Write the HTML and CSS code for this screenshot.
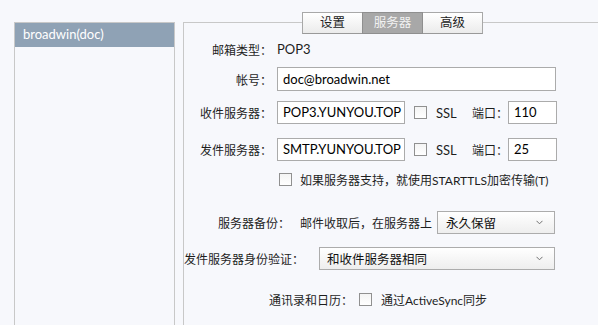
FILE: index.html
```html
<!DOCTYPE html>
<html lang="zh-CN">
<head>
    <meta charset="UTF-8">
    <title>帐户设置</title>
    <link rel="stylesheet" href="styles.css">
</head>
<body>
    <div class="window">
        <div class="accounts">
            <div class="account active">broadwin(doc)</div>
        </div>

        <div class="settings">
            <div class="tabs">
                <div class="tab">设置</div>
                <div class="tab active">服务器</div>
                <div class="tab">高级</div>
            </div>

            <form class="form">
                <div class="row row-type">
                    <span class="label">邮箱类型：</span>
                    <span class="value">POP3</span>
                </div>

                <div class="row row-account">
                    <span class="label">帐号：</span>
                    <div class="input wide">doc@broadwin.net</div>
                </div>

                <div class="row row-in">
                    <span class="label">收件服务器：</span>
                    <div class="input host">POP3.YUNYOU.TOP</div>
                    <span class="check"></span>
                    <span class="ssl">SSL</span>
                    <span class="port-label">端口：</span>
                    <div class="input port">110</div>
                </div>

                <div class="row row-out">
                    <span class="label">发件服务器：</span>
                    <div class="input host">SMTP.YUNYOU.TOP</div>
                    <span class="check"></span>
                    <span class="ssl">SSL</span>
                    <span class="port-label">端口：</span>
                    <div class="input port">25</div>
                </div>

                <div class="row row-tls">
                    <span class="check"></span>
                    <span class="check-text">如果服务器支持，就使用STARTTLS加密传输(T)</span>
                </div>

                <div class="row row-backup">
                    <span class="plain">服务器备份：</span>
                    <span class="plain backup-text">邮件收取后，在服务器上</span>
                    <div class="select backup-select">
                        <span>永久保留</span>
                        <svg class="chevron" width="7" height="5" viewBox="0 0 7 5"><path d="M0.5 0.8 L3.5 3.8 L6.5 0.8" fill="none" stroke="#707070" stroke-width="1"/></svg>
                    </div>
                </div>

                <div class="row row-auth">
                    <span class="plain">发件服务器身份验证：</span>
                    <div class="select auth-select">
                        <span>和收件服务器相同</span>
                        <svg class="chevron" width="7" height="5" viewBox="0 0 7 5"><path d="M0.5 0.8 L3.5 3.8 L6.5 0.8" fill="none" stroke="#707070" stroke-width="1"/></svg>
                    </div>
                </div>

                <div class="row row-sync">
                    <span class="plain">通讯录和日历：</span>
                    <span class="check"></span>
                    <span class="check-text">通过ActiveSync同步</span>
                </div>
            </form>
        </div>
    </div>
</body>
</html>
```

FILE: styles.css
```css
html, body {
    margin: 0;
    padding: 0;
    height: 325px;
    overflow: hidden;
}
body {
    background: #f7f8fc;
    color: #1e1e1e;
    font-family: "Lato", "Noto Sans CJK SC", sans-serif;
    font-size: 12px;
}
.window {
    display: flex;
    gap: 8px;
    padding: 22px 0 0 14px;
}
.accounts {
    width: 161px;
    height: 400px;
    box-sizing: border-box;
    border: 1px solid #c8c8c8;
}
.account {
    height: 24px;
    line-height: 23px;
    padding-left: 8px;
    font-size: 13px;
}
.account.active {
    background: #8fa2b5;
    color: #fff;
}
.settings {
    flex: 1;
    height: 400px;
    border-top: 1px solid #c8c8c8;
    border-left: 1px solid #c8c8c8;
}
.tabs {
    display: flex;
    margin: -11px 0 0 118px;
}
.tab {
    width: 61px;
    height: 22px;
    box-sizing: border-box;
    margin-right: -1px;
    border: 1px solid #a8a8a8;
    border-bottom-color: #999;
    background: linear-gradient(#ffffff, #ebebeb);
    text-align: center;
    line-height: 20px;
    font-size: 12.5px;
    color: #222;
}
.tab.active {
    position: relative;
    background: #a8a8a8;
    border-color: #8f8f8f;
    color: #f2f2f2;
}
.form {
    margin: 0;
    padding-top: 3px;
}
.row {
    display: flex;
    align-items: center;
}
.label {
    width: 88px;
    text-align: right;
    margin-right: 5px;
    flex-shrink: 0;
}
.value {
    font-size: 13px;
}
.input {
    height: 23px;
    box-sizing: border-box;
    border: 1px solid #ababab;
    background: #fff;
    padding-left: 5px;
    line-height: 21px;
    font-size: 13px;
    color: #000;
}
.input.wide {
    width: 279px;
    height: 24px;
    line-height: 22px;
}
.input.host {
    width: 128px;
}
.input.port {
    width: 49px;
}
.check {
    width: 13px;
    height: 13px;
    box-sizing: border-box;
    border: 1px solid #909090;
    background: linear-gradient(#f4f4f4, #ffffff);
    flex-shrink: 0;
}
.row-in .check,
.row-out .check {
    margin-left: 9px;
}
.ssl {
    width: 36px;
    margin-left: 9px;
    font-size: 13px;
}
.port-label {
    width: 36px;
}
.row-type {
    height: 24px;
    margin-top: 0;
}
.row-account {
    margin-top: 6px;
}
.row-in {
    margin-top: 10px;
}
.row-out {
    margin-top: 14px;
}
.row-tls {
    height: 18px;
    margin-top: 9px;
    padding-left: 95px;
}
.check-text {
    margin-left: 9px;
}
.row-tls .check-text {
    margin-left: 8px;
}
.select {
    display: flex;
    align-items: center;
    justify-content: space-between;
    height: 23px;
    box-sizing: border-box;
    border: 1px solid #acacac;
    background: linear-gradient(#ffffff, #eeeeee);
    font-size: 12.5px;
    color: #111;
}
.chevron {
    margin-right: 11px;
}
.row-backup {
    margin-top: 23px;
    padding-left: 34px;
}
.backup-text {
    margin-left: 10px;
    margin-right: 5px;
}
.backup-select {
    width: 118px;
    padding-left: 8px;
}
.row-auth {
    margin-top: 13px;
}
.auth-select {
    width: 236px;
    margin-left: 15px;
    padding-left: 7px;
}
.row-sync {
    height: 20px;
    margin-top: 19px;
    padding-left: 85px;
}
.row-sync .check {
    margin-left: 6px;
}
```
